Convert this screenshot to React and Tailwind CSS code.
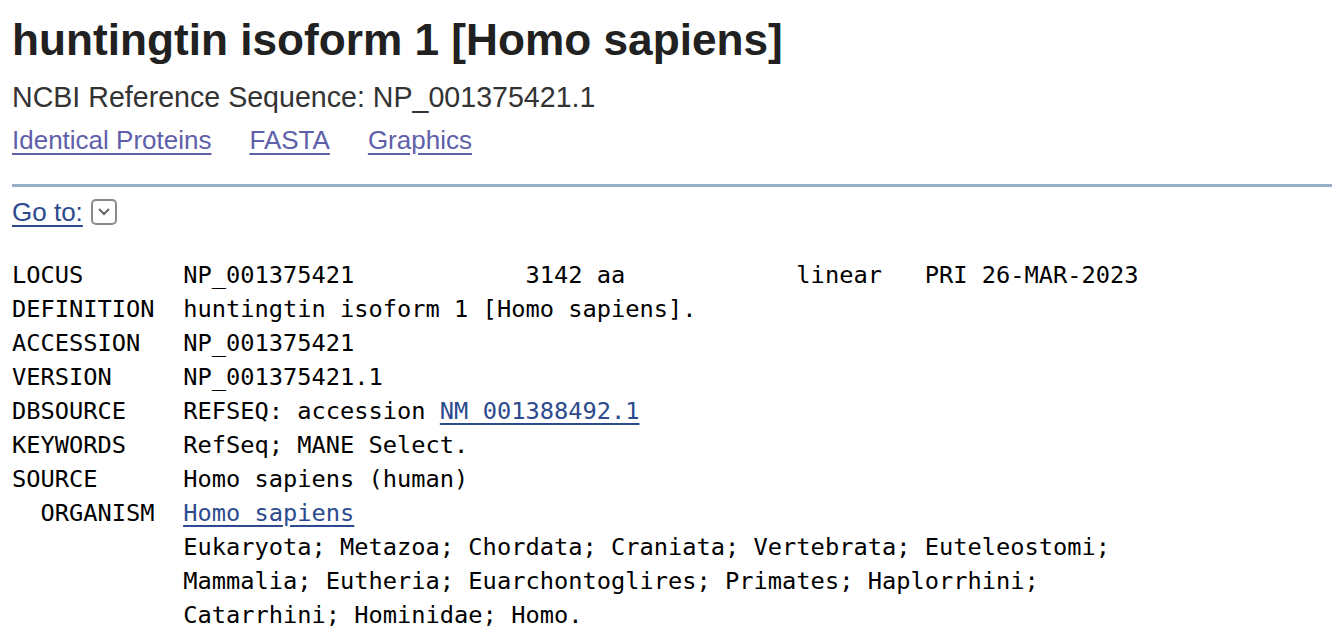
import React from "react";

const mono = { fontFamily: '"DejaVu Sans Mono", "Liberation Mono", monospace' };

function L({ children }) {
  return <a href="#" className="text-[#2c4a8e] underline underline-offset-[4px]">{children}</a>;
}

export default function App() {
  return (
    <div className="bg-white min-h-[630px] w-[1332px] overflow-hidden pl-[12px] text-[#212121]" style={{ fontFamily: '"Liberation Sans", Arial, sans-serif' }}>
      <h1 className="pt-[15px] text-[44.2px] leading-[50px] font-bold text-[#212121]">huntingtin isoform 1 [Homo sapiens]</h1>
      <div className="mt-[16px] text-[28.6px] leading-[32px] text-[#333333]">NCBI Reference Sequence: NP_001375421.1</div>
      <div className="mt-[12px] flex gap-[38px] text-[26px] leading-[30px]">
        <a href="#" className="text-[#6060aa] underline underline-offset-[4px]">Identical Proteins</a>
        <a href="#" className="text-[#6060aa] underline underline-offset-[4px]">FASTA</a>
        <a href="#" className="text-[#6060aa] underline underline-offset-[4px]">Graphics</a>
      </div>
      <div className="mt-[29px] h-[3px] bg-[#97b0c8]" />
      <div className="mt-[11px] flex items-center gap-[8px] text-[26px] leading-[28px]">
        <a href="#" className="text-[#2c4a8e] underline underline-offset-[4px]">Go to:</a>
        <span className="shrink-0 w-[26px] h-[26px] rounded-[5px] border-2 border-[#8a8a8a] flex items-center justify-center">
          <svg width="14" height="10" viewBox="0 0 14 10"><path d="M2 2 L7 7 L12 2" fill="none" stroke="#666" strokeWidth="2" /></svg>
        </span>
      </div>
      <pre className="mt-[32px] text-[23.7px] leading-[34px] text-[#000]" style={mono}>
{`LOCUS       NP_001375421            3142 aa            linear   PRI 26-MAR-2023
DEFINITION  huntingtin isoform 1 [Homo sapiens].
ACCESSION   NP_001375421
VERSION     NP_001375421.1
DBSOURCE    REFSEQ: accession `}<L>NM_001388492.1</L>{`
KEYWORDS    RefSeq; MANE Select.
SOURCE      Homo sapiens (human)
  ORGANISM  `}<L>Homo sapiens</L>{`
            Eukaryota; Metazoa; Chordata; Craniata; Vertebrata; Euteleostomi;
            Mammalia; Eutheria; Euarchontoglires; Primates; Haplorrhini;
            Catarrhini; Hominidae; Homo.`}
      </pre>
    </div>
  );
}
